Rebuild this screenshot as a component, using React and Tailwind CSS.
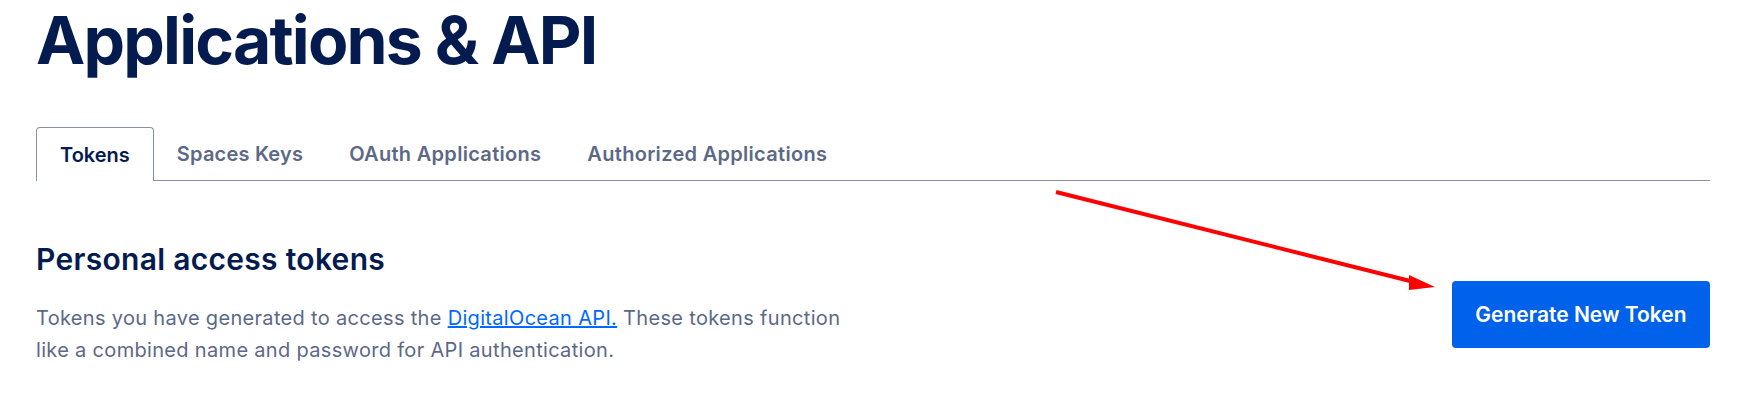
export default function App() {
  const font = { fontFamily: '"Inter", "Lato", sans-serif' };
  return (
    <div className="relative w-[1759px] h-[411px] bg-white overflow-hidden" style={font}>
      <div className="pl-[36px] pr-[49px]">
        <h1 className="text-[66px] leading-[80px] font-bold text-[#031b4e] tracking-[-1.8px]">Applications &amp; API</h1>
        <div className="mt-[47px] flex border-b border-[#8690a9] h-[54px]">
          <div className="px-[23px] flex items-center border border-b-0 border-[#8690a9] rounded-t-[4px] bg-white text-[20px] font-semibold text-[#031b4e] -mb-px">Tokens</div>
          <div className="px-[23px] flex items-center text-[20px] font-semibold text-[#5b6987] tracking-[0.2px]">Spaces Keys</div>
          <div className="px-[23px] flex items-center text-[20px] font-semibold text-[#5b6987] tracking-[0.3px]">OAuth Applications</div>
          <div className="px-[23px] flex items-center text-[20px] font-semibold text-[#5b6987] tracking-[0.3px]">Authorized Applications</div>
        </div>
        <div className="flex justify-between items-start mt-[60px]">
          <div>
            <h2 className="text-[30px] leading-[36px] font-semibold text-[#031b4e] tracking-[0.3px]">Personal access tokens</h2>
            <p className="mt-[25px] w-[830px] text-[20px] leading-[32px] text-[#5b6987] tracking-[0.32px]">
              Tokens you have generated to access the{" "}
              <a href="#" className="text-[#0069ff] underline">DigitalOcean API.</a> These tokens function like a combined name and password for API authentication.
            </p>
          </div>
          <button className="mt-[40px] w-[258px] h-[67px] rounded-[4px] bg-[#0061eb] text-white text-[21px] font-semibold">Generate New Token</button>
        </div>
      </div>
      <svg className="absolute left-0 top-0 pointer-events-none" width="1759" height="411">
        <line x1="1056" y1="192" x2="1414" y2="282" stroke="#ff0000" strokeWidth="4" />
        <polygon points="1435,287 1409,275 1409,290" fill="#ff0000" />
      </svg>
    </div>
  );
}
